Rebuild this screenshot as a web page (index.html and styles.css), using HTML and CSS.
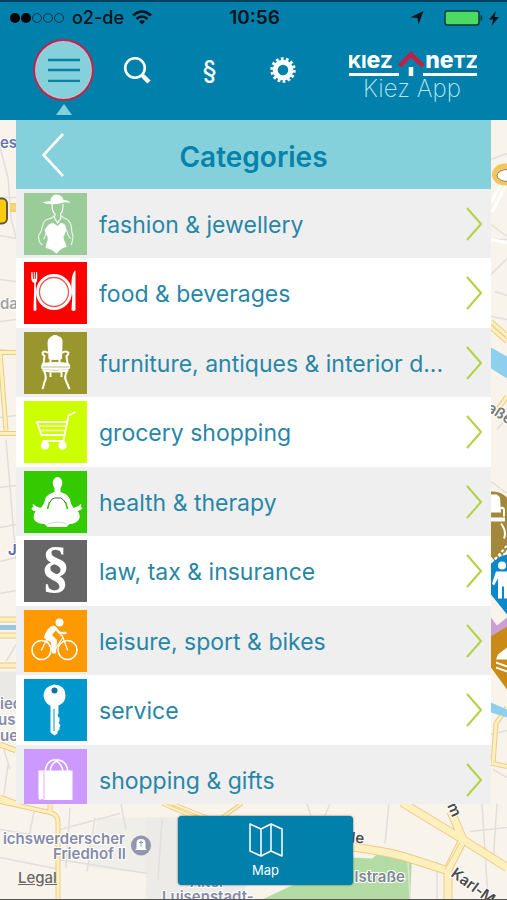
FILE: index.html
```html
<!DOCTYPE html>
<html lang="en">
<head>
<meta charset="utf-8">
<meta name="viewport" content="width=device-width, initial-scale=1">
<title>Kiez App – Categories</title>
<link rel="stylesheet" href="styles.css">
</head>
<body>
<svg class="map" viewBox="0 0 507 900" preserveAspectRatio="xMidYMid slice" aria-hidden="true">
  <rect width="507" height="900" fill="#f9f4eb"/>
  <!-- parks and plots -->
  <path d="M0 672h16v36H0z" fill="#ebe9e6"/>
  <path d="M98 818h70l20 55-8 27h-35l2-26-60-6z" fill="#efeee9"/>
  <path d="M145 818h100v82h-98z" fill="#ecebe8"/>
  <path d="M262 900l90-42 20 1 10-8 30 8-2 41z" fill="#b2dca4"/>
  <!-- minor streets -->
  <g fill="none" stroke="#e2ded9" stroke-width="1.5">
    <path d="M0 148l8 30 3 40 5 20M0 198h16M0 236l16 3M0 280l16 2M0 322l16-2M0 350l16 2M0 418l16-2M6 440l10 120M0 488l16-2M0 528l16-3M0 562l16-4M0 594l16-3M6 662l12-20M4 750l6 20M8 765l-4 30"/>
    <path d="M0 830l60 10M34 812l-6 30M70 808l-4 60M58 860l90 14M95 818l-8 54M60 830l60-16M120 800l6 30M0 858l60 12M162 820l-4 60M307 804l4 12M330 804l-5 12M389 804l-4 40M437 862v38M470 832l37-4M482 804l6 96M408 862l2 38M497 804l-4 60"/>
    <path d="M491 160l16-6M491 225l16 12M491 240h16M491 275l16-16M495 292l12 4M491 317l16 3M491 482l16 12M497 430l10-12M491 735l16-4M493 770l14 8"/>
  </g>
  <path d="M506 185l-14 28M501 185l-10 18M491 240l16 3" fill="none" stroke="#fff" stroke-width="3"/>
  <!-- main roads -->
  <g fill="none" stroke="#eccb8a">
    <path d="M10 208h6" stroke-width="9"/>
    <path d="M0 353h16M0 434h16M0 353l6 78" stroke-width="5"/>
    <path d="M0 620h16M0 636h16M0 666h16M0 745l16 6M0 798l16 6" stroke-width="6"/>
    <path d="M0 802l50 11q8 2 8 10v77M50 813v-9" stroke-width="5"/>
    <path d="M162 804l30 13 60 10M242 804l-20 14M172 804l40 16" stroke-width="4"/>
    <path d="M402 803l56 34 49 31M451 812l12 28-15 30v30M340 846q50 6 70 13l40 13" stroke-width="9"/>
    <path d="M491 322l16 14M491 328l16 14M507 397l-10 14M507 708l-11 16-3 40 14 3" stroke-width="5"/>
  </g>
  <g fill="none" stroke="#fdf0bd">
    <path d="M10 208h6" stroke-width="6" stroke="#fbd66d"/>
    <path d="M0 353h16M0 434h16M0 353l6 78" stroke-width="3"/>
    <path d="M0 620h16M0 636h16M0 666h16M0 745l16 6M0 798l16 6" stroke-width="4"/>
    <path d="M0 802l50 11q8 2 8 10v77M50 813v-9" stroke-width="3"/>
    <path d="M162 804l30 13 60 10M242 804l-20 14M172 804l40 16" stroke-width="2"/>
    <path d="M402 803l56 34 49 31M451 812l12 28-15 30v30M340 846q50 6 70 13l40 13" stroke-width="7"/>
    <path d="M491 322l16 14M491 328l16 14M507 397l-10 14M507 708l-11 16-3 40 14 3" stroke-width="3"/>
  </g>
  <path d="M460 843l-15 27" stroke="#eccb8a" stroke-width="1"/>
  <!-- water -->
  <path d="M0 628h16" stroke="#9cc7e0" stroke-width="5"/>
  <path d="M491 348l16 9v22l-16-10zM491 703l16 7v8l-16-5z" fill="#8dd0ee"/>
  <!-- road badges -->
  <rect x="-12" y="199" width="19" height="25" rx="5" fill="#fecb11" stroke="#665a38" stroke-width="2"/>
  <ellipse cx="505" cy="175" rx="13" ry="11" fill="#f3c65a"/>
  <ellipse cx="508" cy="176" rx="11" ry="6" fill="#fff" stroke="#8a8370"/>
  <!-- pins -->
  <path d="M491 492q9-1 16 6v52l-10 14-6-7z" fill="#a3873a"/>
  <path d="M491 495h6l3 3 1 15h-10zM491 518h14v4h-14z" fill="#fff"/>
  <path d="M500 509q4-2 4 2v6M501 524q6 8 3 15" fill="none" stroke="#fff" stroke-width="2"/>
  <path d="M491 564q6-7 16-9v60l-16-20z" fill="#0b88c9"/>
  <path d="M491 563q6-7 16-9M495 560l12-14" fill="none" stroke="#fff" stroke-width="2" stroke-dasharray="3 2"/>
  <circle cx="502" cy="566" r="4" fill="#fff"/>
  <path d="M496 572h11v27h-3v-12h-2v12h-4v-20l-4 7-2-2z" fill="#fff"/>
  <path d="M491 618l6 8 10-8v20h-16z" fill="#caa0d2"/>
  <path d="M491 637l16-10v63l-16-22z" fill="#ca8a18"/>
  <path d="M496 660l2-5 9-7v12zM496 662l11 4v2l-11-4zM496 667l11 4v2l-11-4z" fill="#fff"/>
  <!-- cemetery marker -->
  <circle cx="141" cy="846" r="10" fill="#9394ad"/>
  <path d="M136 849v-5q0-5 5-5t5 5v5l2 2h-14zM139 843h4M141 841v6" fill="#fff" stroke="#9394ad"/>
  <!-- labels -->
  <g class="map-label">
    <text x="0" y="148" fill="#6473ae">es</text>
    <text x="0" y="309" fill="#a2a2a2">da</text>
    <text x="8" y="555" fill="#6165ab">J</text>
    <text x="0" y="709">ied</text>
    <text x="-2" y="725">usa</text>
    <text x="0" y="741">ue</text>
    <text x="125" y="844" text-anchor="end">ichswerderscher</text>
    <text x="126" y="859" text-anchor="end">Friedhof II</text>
    <text x="190" y="887">Alter</text>
    <text x="162" y="902">Luisenstadt-</text>
    <text x="405" y="882" text-anchor="end" fill="#7d898f">lstraße</text>
    <g fill="#4c4a49">
      <text x="351" y="843" transform="rotate(5 351 843)">le</text>
      <text x="447" y="806" transform="rotate(66 447 806)">m</text>
      <text x="450" y="876" transform="rotate(36 450 876)">Karl-Marx</text>
      <text x="486" y="411" transform="rotate(32 486 411)" fill="#777">aße</text>
    </g>
  </g>
</svg>

<header class="top">
  <div class="status">
    <div class="status-side">
      <svg width="54" height="12" viewBox="0 0 54 12" fill="none" stroke="#06364b" aria-hidden="true"><circle cx="5" cy="6" r="5" fill="#000" stroke="none"/><circle cx="16" cy="6" r="5" fill="#000" stroke="none"/><circle cx="27" cy="6" r="4.500"/><circle cx="38" cy="6" r="4.500"/><circle cx="49" cy="6" r="4.500"/></svg>
      <span class="carrier">o2-de</span>
      <svg width="20" height="16" viewBox="0 0 20 16" fill="none" stroke="#04141c" stroke-width="2.6" aria-hidden="true"><path d="M1 5.500q9-8 18 0M4.500 9q5.500-5 11 0"/><path d="M7 11.500q3-2.500 6 0l-3 3z" fill="#04141c" stroke="none"/></svg>
    </div>
    <time class="clock">10:56</time>
    <div class="status-side status-end">
      <svg width="14" height="14" viewBox="0 0 14 14" aria-hidden="true"><path d="M13.500 0L8.500 13.500 7.500 7 .5 6.200z" fill="#04141c"/></svg>
      <svg class="battery" width="39" height="16" viewBox="0 0 39 16" aria-hidden="true"><rect x="1" y="1" width="34" height="14" rx="2.500" fill="#4cd964" stroke="#0a3a38" stroke-width="1.500"/><path d="M36.500 5q2 .5 2 3t-2 3z" fill="#0a3a38"/></svg>
      <svg width="10" height="15" viewBox="0 0 10 15" aria-hidden="true"><path d="M7 0L0 8.500h4.200L2.500 15 10 6H5.500z" fill="#04141c"/></svg>
    </div>
  </div>
  <div class="bar">
    <nav class="tools" aria-label="Main">
      <button class="tool active" aria-label="Menu"><svg width="32" height="24" viewBox="0 0 32 24" stroke="#0782a8" stroke-width="2.600" aria-hidden="true"><path d="M0 2h32M0 12h32M0 23h32"/></svg></button>
      <button class="tool" aria-label="Search"><svg width="28" height="28" viewBox="0 0 28 28" fill="none" stroke="#fff" aria-hidden="true"><circle cx="12" cy="12" r="9.800" stroke-width="2.600"/><path d="M18.500 18.500l2 2" stroke-width="3"/><path d="M20 20l6 6" stroke-width="4.500"/></svg></button>
      <button class="tool law" aria-label="Legal notice">§</button>
      <button class="tool" aria-label="Settings"><svg width="26" height="26" viewBox="0 0 26 26" fill="none" stroke="#fff" aria-hidden="true"><circle cx="13" cy="13" r="7.800" stroke-width="5"/><circle cx="13" cy="13" r="11.200" stroke-width="3" stroke-dasharray="2.800 2.227"/></svg></button>
    </nav>
    <svg class="logo" width="128" height="52" viewBox="0 0 128 52" role="img" aria-label="Kiez Netz Kiez App">
      <g class="brand"><text x="-1" y="17">KI<tspan class="tall">e</tspan>Z</text><text x="129" y="17" text-anchor="end"><tspan class="tall">ne</tspan>TZ</text></g>
      <path d="M0 23.500h50M74 23.500h54" stroke="#fff" stroke-width="3"/>
      <path d="M50.500 15L62 3.500l12 11.500" fill="none" stroke="#c41e45" stroke-width="4.500"/>
      <path d="M62 16v9" stroke="#fff" stroke-width="4.500"/>
      <text class="app" x="14" y="46">Kiez App</text>
    </svg>
  </div>
</header>

<main class="panel">
  <div class="panel-head">
    <button class="back" aria-label="Back"><svg width="22" height="44" viewBox="0 0 22 44" fill="none" stroke="#fff" stroke-width="2.600" aria-hidden="true"><path d="M21 1L1.500 22 21 43"/></svg></button>
    <h1>Categories</h1>
  </div>
  <ul class="list">
    <li><button class="row"><svg class="tile fashion" viewBox="0 0 62 62" fill="#fff" aria-hidden="true"><path d="M18 9.500q4-1.500 8-1.500 0-6 6-6.500 6 .5 7 5.500 5 0 7 3-4-1-7-.5-7 2.500-13 1.500-4 0-8-1.500z"/><path d="M27.500 11q0 8 3 10l-.5 4 3 5 3.500-5-.5-4q3-3 2.500-10" fill="none" stroke="#fff" stroke-width="1.100"/><path d="M30 22q-1 3-6 4-5 1-6 7-1 6-4 10 0 7 4 9M36 22q2 3 6 4 4 2 5 9 0 5 1.500 8 0 5-2 9M22 37q-1 7-3 9M42 37q1 5 4 9" fill="none" stroke="#e9f6e6" stroke-width="1.200"/><path d="M23 33q2-3 6-3l4 3 3-3q4 0 5 3l1 4-3 7q0 3 2 6l1 4q-6 1-10 7-4-5-11-6l1-5q2-3 1-6l-3-7z"/></svg><span>fashion &amp; jewellery</span><svg class="chevron" viewBox="0 0 16 34" aria-hidden="true"><path d="M1 1l14 16L1 33"/></svg></button></li>
    <li><button class="row"><svg class="tile food" viewBox="0 0 62 62" fill="#fff" aria-hidden="true"><circle cx="29.500" cy="30" r="18"/><circle cx="29.500" cy="30" r="14.500" fill="none" stroke="#e85a5a" stroke-width="1.300"/><path d="M7 10h1l.5 7h.8V10h1v7h.8l.5-7h1q.8 10-1.400 11l.8 27q-1.500 2-3 0l.8-27Q5.500 20 7 10zM51 8q-5 4-4 22l.8 4-.8 14q2 2 4 0z"/></svg><span>food &amp; beverages</span><svg class="chevron" viewBox="0 0 16 34" aria-hidden="true"><path d="M1 1l14 16L1 33"/></svg></button></li>
    <li><button class="row"><svg class="tile furniture" viewBox="0 0 62 62" fill="#fff" aria-hidden="true"><path d="M26 5q2-1 3-2h3q1 1 4 2 2.500 2 2 6l-.5 16q-7 2-13.500 0l-1-16q0-4 3-6z"/><path d="M24 21q-5-3-6 0 0 2 2 3l-1 8M37 21q5-3 7 0 0 2-2 3l1 8M26 26v6M35 26v6M18 38q12 3 26 0M19 38q4 7 1 12-1 4-2 7M43 38q-4 7-1 12l3 7M26 39v6M37 39v6" fill="none" stroke="#fff" stroke-width="2"/><path d="M18 31q13-2 26 0 3 3 1 6-14 2-28 0-1-4 1-6z"/><path d="M18 35h27" stroke="#99962d" stroke-width=".6"/></svg><span>furniture, antiques &amp; interior d...</span><svg class="chevron" viewBox="0 0 16 34" aria-hidden="true"><path d="M1 1l14 16L1 33"/></svg></button></li>
    <li><button class="row"><svg class="tile grocery" viewBox="0 0 62 62" fill="none" stroke="#fff" stroke-width="1.800" aria-hidden="true"><path d="M51 11l-7 3.500L40 34H17l-4.500-13H42M18 40h21l1-6"/><path d="M15 25h26M17 29.500h23" stroke="#f6ffd0" stroke-width="1.300"/><circle cx="20.500" cy="44.500" r="3.200" fill="#fff"/><circle cx="38" cy="44.500" r="3.200" fill="#fff"/></svg><span>grocery shopping</span><svg class="chevron" viewBox="0 0 16 34" aria-hidden="true"><path d="M1 1l14 16L1 33"/></svg></button></li>
    <li><button class="row"><svg class="tile health" viewBox="0 0 62 62" fill="#fff" aria-hidden="true"><ellipse cx="33" cy="12" rx="4.800" ry="6"/><path d="M30 16h6v5q7 2 9 6 1 6 4 10l5-2 2-2 1 1-1 2 2 1q-2 3-5 3 4 4 1 9-3 4-9 4l-3 3H23l-3-3q-7 0-10-4-2-4 1-9-4 0-4-3l2-1-1-2 1-1 2 2 5 2q4-4 5-10 2-4 9-6z"/><path d="M23 38l2-7M43 38l-2-7" stroke="#33ca00" stroke-width="1.500"/><path d="M25 32q2-5 5-5h6q3 1 5 5" fill="none" stroke="#42664a" stroke-width="1"/><path d="M24 53q9-4 18 0" fill="none" stroke="#8fd77a" stroke-width=".6"/></svg><span>health &amp; therapy</span><svg class="chevron" viewBox="0 0 16 34" aria-hidden="true"><path d="M1 1l14 16L1 33"/></svg></button></li>
    <li><button class="row"><svg class="tile law-tax" viewBox="0 0 62 62" fill="#fff" aria-hidden="true"><text class="section-sign" x="31" y="46" text-anchor="middle">§</text></svg><span>law, tax &amp; insurance</span><svg class="chevron" viewBox="0 0 16 34" aria-hidden="true"><path d="M1 1l14 16L1 33"/></svg></button></li>
    <li><button class="row"><svg class="tile leisure" viewBox="0 0 62 62" fill="none" stroke="#fff" stroke-linecap="round" stroke-linejoin="round" aria-hidden="true"><circle cx="17" cy="40" r="9.500" stroke-width="1.600"/><circle cx="43" cy="40" r="9.500" stroke-width="1.600"/><circle cx="35" cy="12.500" r="4" fill="#fff" stroke="none"/><path d="M20 27q3-10 9-11 3 1 3 3l-5 6 5 5-1 13h-3l-1-11-7-4z" fill="#fff" stroke-width="1"/><path d="M31 18l4 5h6" stroke-width="2.500"/><path d="M17 40l5-10 7 12M38 26l5 14M29 42l9-14M38 26l-2-1" stroke-width="1.200"/></svg><span>leisure, sport &amp; bikes</span><svg class="chevron" viewBox="0 0 16 34" aria-hidden="true"><path d="M1 1l14 16L1 33"/></svg></button></li>
    <li><button class="row"><svg class="tile service" viewBox="0 0 62 62" fill="#fff" aria-hidden="true"><path d="M30 5.500q11 1 11 11 0 7-7 10v8l-1 1 1 3h1v4l-1 1 2 3-1 2 0 2-2 2 0 2-3 2-4-3V27q-7-4-7-11 1-9 11-10.500z"/><circle cx="30" cy="11.500" r="3" fill="#0875a3"/><path d="M29.500 30v22" stroke="#0097cc" stroke-width="1"/></svg><span>service</span><svg class="chevron" viewBox="0 0 16 34" aria-hidden="true"><path d="M1 1l14 16L1 33"/></svg></button></li>
    <li><button class="row"><svg class="tile gifts" viewBox="0 0 62 62" fill="#fff" aria-hidden="true"><path d="M14 21.500h34V51H20l-2-1-3 1-1-2z"/><path d="M19.500 22v28" stroke="#cc99ff" stroke-width=".8"/><path d="M21 25v-5q2-8 8-9h5q7 1 9 9v5M26 25v-5q2-7 7-8M38 25v-5q-2-6-6-8" fill="none" stroke="#fff" stroke-width="1.600"/></svg><span>shopping &amp; gifts</span><svg class="chevron" viewBox="0 0 16 34" aria-hidden="true"><path d="M1 1l14 16L1 33"/></svg></button></li>
  </ul>
</main>

<footer class="bottom">
  <a class="legal" href="#legal">Legal</a>
  <button class="map-button"><svg width="34" height="34" viewBox="0 0 34 34" fill="none" stroke="#fff" stroke-width="1.500" stroke-linejoin="round" aria-hidden="true"><path d="M1 1l11 5 10-5 11 5v27l-11-5-10 5-11-5zM12 6v27M22 1v27"/></svg><span>Map</span></button>
</footer>
</body>
</html>
```
FILE: styles.css
```css
* { box-sizing: border-box; }

body {
  position: relative;
  display: flex;
  flex-direction: column;
  height: 100vh;
  margin: 0;
  overflow: hidden;
  border-bottom: 1px solid #55534f;
  font-family: Inter, "Liberation Sans", sans-serif;
}

button {
  padding: 0;
  border: 0;
  background: none;
  color: inherit;
  font: inherit;
}

svg { display: block; flex: none; }

.map {
  position: absolute;
  inset: 0;
  z-index: -1;
  width: 100%;
  height: 100%;
}

.map-label {
  fill: #858aa8;
  stroke: #fff;
  stroke-width: 2px;
  paint-order: stroke;
  font: 600 15px Inter, sans-serif;
}

.top {
  flex: none;
  height: 120px;
  border-top: 2px solid #04405c;
  background: #0080aa;
}

.status {
  display: grid;
  grid-template-columns: 1fr auto 1fr;
  align-items: center;
  height: 32px;
  padding: 0 8px 0 10px;
  color: #04141c;
  font-size: 18px;
  line-height: 24px;
}

.status-side { display: flex; align-items: center; gap: 8px; }
.status-end { justify-content: flex-end; }
.battery { margin-left: 12px; margin-right: -2px; }
.carrier { font-weight: 500; }
.clock { font-size: 19px; font-weight: 600; }

.bar {
  display: flex;
  justify-content: space-between;
  padding: 5px 30px 0 27px;
}

.tools { display: flex; }

.tool {
  position: relative;
  display: flex;
  align-items: center;
  justify-content: center;
  width: 61px;
  height: 62px;
  margin: 0 6px;
  color: #fff;
}

.active {
  border: 2px solid #b3294f;
  border-radius: 50%;
  background: #84d1dc;
  box-shadow: inset 0 0 0 1px #d9b5c9;
}

.active::after {
  content: "";
  position: absolute;
  top: 63px;
  border: 8px solid transparent;
  border-top: 0;
  border-bottom: 11px solid #84d1dc;
}

.law { font-size: 25px; font-weight: 500; }
.logo { margin-top: 12px; fill: #fff; }
.brand { font: 800 18px Inter, sans-serif; }
.tall { font-size: 23px; }
.app { fill: #b9e4f2; font: 200 24px Inter, sans-serif; }

.panel {
  display: flex;
  flex: 1;
  flex-direction: column;
  min-height: 0;
  margin: 0 16px;
}

.panel-head {
  display: grid;
  flex: none;
  grid-template-columns: 48px 1fr 48px;
  align-items: center;
  height: 69px;
  background: #84d1dc;
}

.back { justify-self: end; }

h1 {
  margin: 4px 0 0;
  color: #0782aa;
  font-size: 28px;
  font-weight: 600;
  line-height: 36px;
  text-align: center;
}

.list {
  flex: 1;
  min-height: 0;
  margin: 0;
  padding: 0;
  overflow: hidden;
  list-style: none;
}

.row {
  display: flex;
  align-items: center;
  gap: 12px;
  width: 100%;
  height: 69px;
  padding: 0 9px 0 8px;
  background: #efefef;
  color: #2786a8;
  font-size: 23px;
  line-height: 32px;
  text-align: left;
}

li:nth-child(even) .row { height: 70px; background: #fff; }

.row span {
  flex: 1;
  min-width: 0;
  padding-top: 2px;
  overflow: hidden;
  white-space: nowrap;
}

.tile { width: 63px; height: 62px; }
.fashion { background: #99cc99; }
.food { background: #ff0000; }
.furniture { background: #99962d; }
.grocery { background: #ccff00; }
.health { background: #33ca00; }
.law-tax { background: #666666; }
.leisure { background: #ff9900; }
.service { background: #0097cc; }
.gifts { background: #cc99ff; }

.section-sign { font: bold 58px "Liberation Serif", serif; }

.chevron {
  width: 16px;
  height: 34px;
  fill: none;
  stroke: #b4d245;
  stroke-width: 2px;
}

.bottom {
  display: grid;
  flex: none;
  grid-template-columns: 160fr 175px 154fr;
  align-items: start;
  height: 95px;
  padding: 12px 0 0 18px;
}

.legal {
  align-self: end;
  margin-bottom: 12px;
  color: #696765;
  font-size: 15px;
  font-weight: 500;
  line-height: 18px;
}

.map-button {
  display: flex;
  flex-direction: column;
  align-items: center;
  justify-content: center;
  gap: 4px;
  height: 69px;
  border-radius: 4px;
  background: #0080aa;
  box-shadow: 0 0 2px #4c4a49;
  color: #fff;
  font-size: 13px;
  line-height: 18px;
}
```
